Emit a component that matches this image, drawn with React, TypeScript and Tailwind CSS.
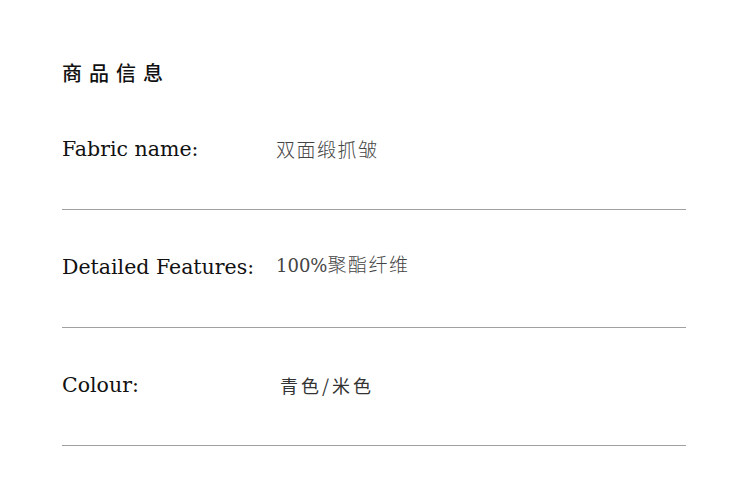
const rows = [
  { label: 'Fabric name:', value: '双面缎抓皱', kind: 'serif' },
  { label: 'Detailed Features:', value: '100%聚酯纤维', kind: 'mixed' },
  { label: 'Colour:', value: '青色/米色', kind: 'sans' },
];

const serif = "font-['DejaVu_Serif','Noto_Sans_CJK_SC',serif]";

export default function App() {
  return (
    <div className="w-[750px] h-[492px] bg-white pl-[62px] pr-[64px]">
      {/* title */}
      <h1 className="pt-[59px] text-[20px] leading-[28px] font-medium tracking-[7px] text-[#111] font-['Noto_Sans_CJK_SC',sans-serif]">
        商品信息
      </h1>

      {/* first row sits under the title, the rest under a rule */}
      <div className="mt-[48px]">
        {rows.map((r, i) => (
          <div key={r.label} className={i === 0 ? 'pb-[46px] border-b border-[#a0a0a0]' : 'pt-[43px] pb-[46px] border-b border-[#a0a0a0]'}>
            <div className="flex items-center h-[28px]">
              <span className={`w-[214px] shrink-0 text-[20.5px] text-[#111] ${serif}`}>{r.label}</span>
              {r.kind === 'serif' && (
                <span className="text-[19px] text-[#444] font-light font-['Noto_Sans_CJK_SC',sans-serif] tracking-[1.5px]">{r.value}</span>
              )}
              {r.kind === 'mixed' && (
                <span className={`-mt-[5px] text-[18px] text-[#444] ${serif}`}>
                  100%<span className="font-light font-['Noto_Sans_CJK_SC',sans-serif] text-[19px] tracking-[1.5px]">聚酯纤维</span>
                </span>
              )}
              {r.kind === 'sans' && (
                <span className="ml-[4px] text-[18px] text-[#333] tracking-[3px] font-['Noto_Sans_CJK_SC',sans-serif]">{r.value}</span>
              )}
            </div>
          </div>
        ))}
      </div>
    </div>
  );
}
